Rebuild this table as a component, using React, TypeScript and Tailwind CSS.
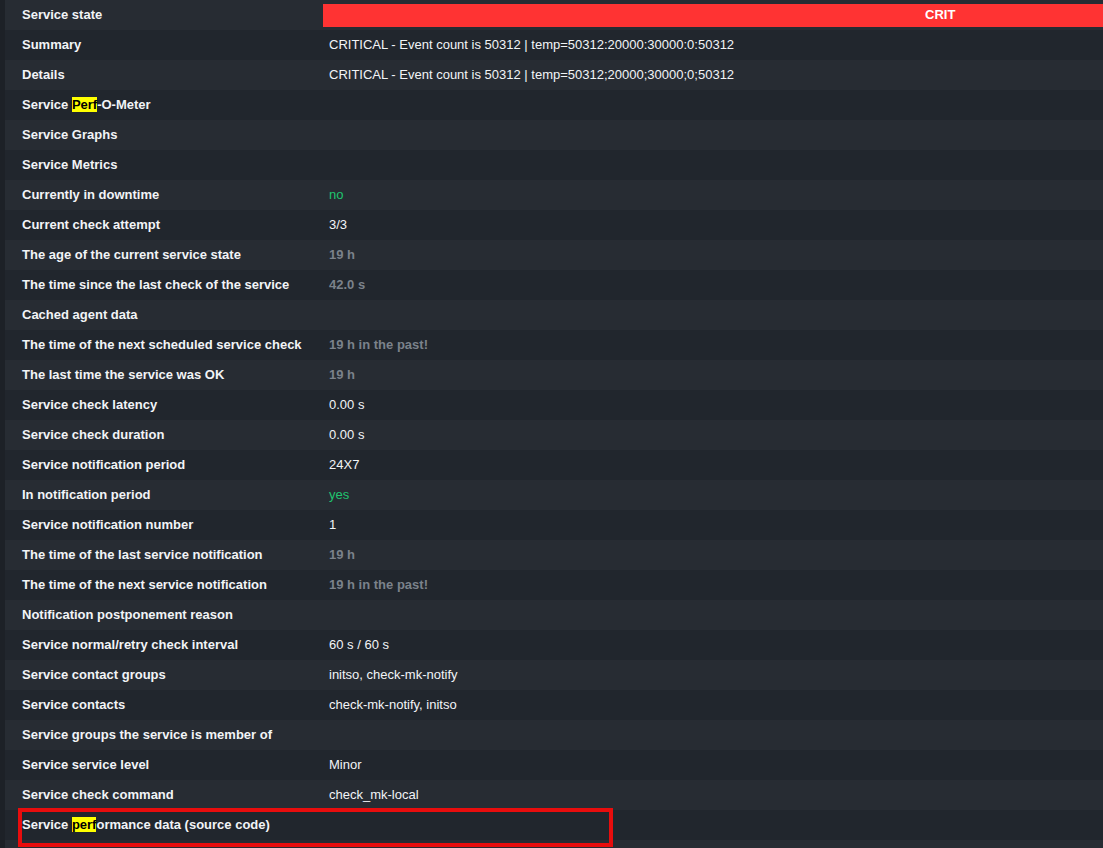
import type { ReactNode } from 'react';

type Row = {
  label: ReactNode;
  value?: ReactNode;
  tone?: 'plain' | 'muted' | 'ok';
};

const hl = (t: string) => <span className="bg-[#ffff00] text-black">{t}</span>;

const rows: Row[] = [
  { label: 'Service state' },
  { label: 'Summary', value: 'CRITICAL - Event count is 50312 | temp=50312:20000:30000:0:50312' },
  { label: 'Details', value: 'CRITICAL - Event count is 50312 | temp=50312;20000;30000;0;50312' },
  { label: <>Service {hl('Perf')}-O-Meter</> },
  { label: 'Service Graphs' },
  { label: 'Service Metrics' },
  { label: 'Currently in downtime', value: 'no', tone: 'ok' },
  { label: 'Current check attempt', value: '3/3' },
  { label: 'The age of the current service state', value: '19 h', tone: 'muted' },
  { label: 'The time since the last check of the service', value: '42.0 s', tone: 'muted' },
  { label: 'Cached agent data' },
  { label: 'The time of the next scheduled service check', value: '19 h in the past!', tone: 'muted' },
  { label: 'The last time the service was OK', value: '19 h', tone: 'muted' },
  { label: 'Service check latency', value: '0.00 s' },
  { label: 'Service check duration', value: '0.00 s' },
  { label: 'Service notification period', value: '24X7' },
  { label: 'In notification period', value: 'yes', tone: 'ok' },
  { label: 'Service notification number', value: '1' },
  { label: 'The time of the last service notification', value: '19 h', tone: 'muted' },
  { label: 'The time of the next service notification', value: '19 h in the past!', tone: 'muted' },
  { label: 'Notification postponement reason' },
  { label: 'Service normal/retry check interval', value: '60 s / 60 s' },
  { label: 'Service contact groups', value: 'initso, check-mk-notify' },
  { label: 'Service contacts', value: 'check-mk-notify, initso' },
  { label: 'Service groups the service is member of' },
  { label: 'Service service level', value: 'Minor' },
  { label: 'Service check command', value: 'check_mk-local' },
  { label: <>Service {hl('perf')}ormance data (source code)</> },
  { label: '' },
];

const toneClass = {
  plain: 'text-[#f2f4f7] font-normal',
  muted: 'text-[#7b828b] font-bold',
  ok: 'text-[#1fc46f] font-normal',
};

function App() {
  return (
    <div
      className="relative h-[848px] w-[1103px] overflow-hidden bg-[#1d2127] pl-[5px] text-[13px]"
      style={{ fontFamily: '"Liberation Sans", Arial, sans-serif' }}
    >
      {rows.map((row, i) => (
        <div
          key={i}
          className={`flex h-[30px] items-center ${i % 2 === 0 ? 'bg-[#272c33]' : 'bg-[#21262d]'}`}
        >
          <div className="w-[318px] shrink-0 pl-[17px] font-bold text-[#f2f4f7]">{row.label}</div>
          {i === 0 ? (
            <div className="flex h-[23px] flex-1 items-center bg-[#ff3333] pl-[602px] font-bold text-white">
              CRIT
            </div>
          ) : (
            <div className={`pl-[6px] ${toneClass[row.tone ?? 'plain']}`}>{row.value}</div>
          )}
        </div>
      ))}

      {/* annotation box */}
      <div className="absolute left-[18px] top-[808px] h-[39px] w-[595px] border-4 border-[#e80d0d]" />
    </div>
  );
}

export default App;
